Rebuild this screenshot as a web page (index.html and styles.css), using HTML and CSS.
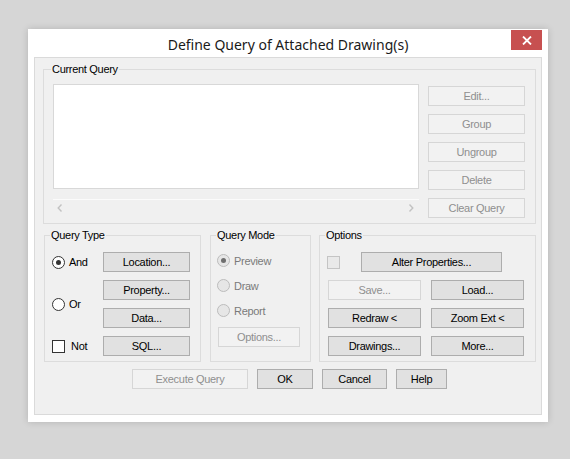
FILE: index.html
```html
<!DOCTYPE html>
<html>
<head>
<meta charset="utf-8">
<title>Define Query of Attached Drawing(s)</title>
<link rel="stylesheet" href="styles.css">
</head>
<body>
<div class="window">
  <div class="titlebar">
    <div class="spacer"></div>
    <div class="title">Define Query of Attached Drawing(s)</div>
    <div class="close">
      <svg width="10" height="9" viewBox="0 0 10 9"><path d="M1 0.5 L9 8.5 M9 0.5 L1 8.5" stroke="#fff" stroke-width="1.8" fill="none"/></svg>
    </div>
  </div>
  <div class="client">
    <fieldset class="group current">
      <legend>Current Query</legend>
      <div class="cq-body">
        <div class="cq-left">
          <div class="listbox"></div>
          <div class="hscroll">
            <svg width="6" height="8" viewBox="0 0 6 8"><path d="M4.5 0.5 L1.2 4 L4.5 7.5" stroke="#c2c2c2" stroke-width="1.4" fill="none"/></svg>
            <svg width="6" height="8" viewBox="0 0 6 8"><path d="M1.5 0.5 L4.8 4 L1.5 7.5" stroke="#c2c2c2" stroke-width="1.4" fill="none"/></svg>
          </div>
        </div>
        <div class="cq-buttons">
          <button class="btn disabled">Edit...</button>
          <button class="btn disabled">Group</button>
          <button class="btn disabled">Ungroup</button>
          <button class="btn disabled">Delete</button>
          <button class="btn disabled">Clear Query</button>
        </div>
      </div>
    </fieldset>

    <div class="lower">
      <fieldset class="group qtype">
        <legend>Query Type</legend>
        <div class="qt-grid">
          <div class="opt r1"><span class="radio checked"></span><span>And</span></div>
          <button class="btn b-loc">Location...</button>
          <div class="opt r23"><span class="radio"></span><span>Or</span></div>
          <button class="btn">Property...</button>
          <button class="btn">Data...</button>
          <div class="opt chk r4"><span class="check"></span><span>Not</span></div>
          <button class="btn">SQL...</button>
        </div>
      </fieldset>

      <fieldset class="group qmode">
        <legend>Query Mode</legend>
        <div class="qm-body">
          <div class="opt dis"><span class="radio checked"></span><span>Preview</span></div>
          <div class="opt dis"><span class="radio"></span><span>Draw</span></div>
          <div class="opt dis"><span class="radio"></span><span>Report</span></div>
          <button class="btn disabled qm-btn">Options...</button>
        </div>
      </fieldset>

      <fieldset class="group options">
        <legend>Options</legend>
        <div class="op-body">
          <div class="op-top">
            <span class="check dis"></span>
            <button class="btn alter">Alter Properties...</button>
          </div>
          <div class="op-grid">
            <button class="btn disabled">Save...</button>
            <button class="btn">Load...</button>
            <button class="btn">Redraw &lt;</button>
            <button class="btn">Zoom Ext &lt;</button>
            <button class="btn">Drawings...</button>
            <button class="btn">More...</button>
          </div>
        </div>
      </fieldset>
    </div>

    <div class="actions">
      <button class="btn disabled w-exec">Execute Query</button>
      <button class="btn w-ok">OK</button>
      <button class="btn w-cancel">Cancel</button>
      <button class="btn w-help">Help</button>
    </div>
  </div>
</div>
</body>
</html>
```

FILE: styles.css
```css
* { box-sizing: border-box; }

html, body { height: 459px; }

body {
  margin: 0;
  padding: 29px 0 0 28px;
  background: #d6d6d6;
  font-family: "Liberation Sans", Arial, sans-serif;
  font-size: 11px;
  letter-spacing: -0.3px;
  color: #000;
  overflow: hidden;
}

.window {
  width: 520px;
  height: 393px;
  background: #fff;
  box-shadow: 0 0 7px rgba(0, 0, 0, 0.16);
  display: flex;
  flex-direction: column;
  padding: 0 6px 7px 6px;
}

.titlebar {
  height: 28px;
  display: grid;
  grid-template-columns: 1fr auto 1fr;
}

.title {
  font-family: "Noto Sans", "Open Sans", sans-serif;
  font-size: 14px;
  letter-spacing: 0;
  line-height: 28px;
  padding-top: 2px;
  color: #1a1a1a;
  white-space: nowrap;
}

.close {
  justify-self: end;
  width: 31px;
  height: 20px;
  margin-top: 1px;
  background: #c75050;
  display: flex;
  align-items: center;
  justify-content: center;
}

.client {
  flex: 1;
  background: #f0f0f0;
  border: 1px solid #dadada;
  padding: 5px 5px 0 8px;
  display: flex;
  flex-direction: column;
}

.group {
  margin: 0;
  padding: 0;
  min-width: 0;
  border: 1px solid #dcdcdc;
}

.group legend {
  padding: 0 1px;
  margin-left: 7px;
  font-size: 11px;
  line-height: 13px;
}

.lower .group legend { margin-left: 5px; }

/* Current Query */
.cq-body {
  display: flex;
  gap: 9px;
  padding: 8px 10px 5px 9px;
}

.cq-left {
  flex: 1;
  display: flex;
  flex-direction: column;
}

.listbox {
  height: 105px;
  background: #fff;
  border: 1px solid #d8d8d8;
}

.hscroll {
  margin-top: 10px;
  height: 19px;
  border-top: 1px solid #fbfbfb;
  display: flex;
  justify-content: space-between;
  align-items: flex-start;
  padding: 4px 5px 0 4px;
}

.hscroll svg { display: block; }

.cq-buttons {
  width: 97px;
  padding-top: 2px;
  display: flex;
  flex-direction: column;
  gap: 8px;
}

/* Buttons */
.btn {
  height: 20px;
  margin: 0;
  padding: 0;
  font-family: "Liberation Sans", Arial, sans-serif;
  font-size: 11px;
  letter-spacing: -0.3px;
  color: #000;
  background: #e1e1e1;
  border: 1px solid #adadad;
  border-radius: 0;
  line-height: 17px;
  text-align: center;
  white-space: nowrap;
}

.btn.disabled {
  background: #f2f2f2;
  border-color: #d6d6d6;
  color: #8f8f8f;
}

/* Radios and checkboxes */
.opt {
  display: flex;
  align-items: center;
  gap: 4px;
  white-space: nowrap;
}

.opt.chk { gap: 6px; }

.radio {
  width: 13px;
  height: 13px;
  border-radius: 50%;
  border: 1px solid #333;
  background: #fff;
  display: flex;
  align-items: center;
  justify-content: center;
  flex: none;
}

.radio.checked::after {
  content: "";
  width: 5px;
  height: 5px;
  border-radius: 50%;
  background: #333;
}

.check {
  width: 13px;
  height: 13px;
  border: 1px solid #333;
  background: #fff;
  flex: none;
}

.opt.dis { color: #7a7a7a; }
.opt.dis .radio { border-color: #bcbcbc; background: #e6e6e6; }
.opt.dis .radio.checked::after { background: #6f6f6f; }
.check.dis { border-color: #c4c4c4; background: #e9e9e9; }

/* Lower row */
.lower {
  display: flex;
  margin: 5px 0 0 1px;
}

.qtype { width: 157px; }
.qmode { width: 101px; margin-left: 9px; }
.options { width: 217px; margin-left: 8px; }

.qt-grid {
  display: grid;
  grid-template-columns: 51px 87px;
  grid-template-rows: repeat(4, 20px);
  row-gap: 8px;
  padding: 10px 0 5px 7px;
}

.qt-grid .r1 { grid-column: 1; grid-row: 1; }
.qt-grid .r23 { grid-column: 1; grid-row: 2 / 4; }
.qt-grid .r4 { grid-column: 1; grid-row: 4; }
.qt-grid .btn { grid-column: 2; }

.qm-body {
  display: flex;
  flex-direction: column;
  padding: 6px 0 0 6px;
}

.qm-body .opt { height: 25px; }

.qm-btn {
  width: 82px;
  margin: 4px 0 0 1px;
}

.op-body {
  padding: 10px 0 5px 8px;
}

.op-top {
  display: flex;
  align-items: center;
  height: 20px;
}

.op-top .check { margin-left: -1px; }

.alter {
  width: 141px;
  margin-left: 21px;
}

.op-grid {
  margin-top: 8px;
  display: grid;
  grid-template-columns: 93px 93px;
  column-gap: 10px;
  row-gap: 8px;
}

/* Bottom actions */
.actions {
  display: flex;
  justify-content: center;
  gap: 9px;
  margin-top: 7px;
}

.w-exec { width: 116px; }
.w-ok { width: 56px; }
.w-cancel { width: 65px; }
.w-help { width: 51px; }
```
